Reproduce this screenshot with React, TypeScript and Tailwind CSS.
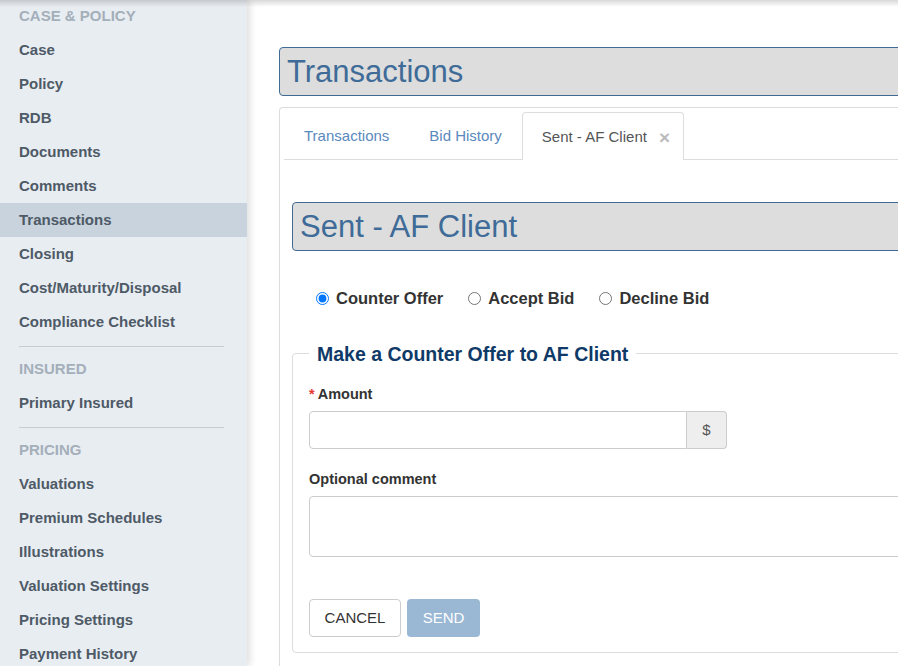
import React from 'react';

type NavItem = { label: string; active?: boolean };
type NavGroup = { title: string; items: NavItem[] };

const groups: NavGroup[] = [
  {
    title: 'CASE & POLICY',
    items: [
      { label: 'Case' },
      { label: 'Policy' },
      { label: 'RDB' },
      { label: 'Documents' },
      { label: 'Comments' },
      { label: 'Transactions', active: true },
      { label: 'Closing' },
      { label: 'Cost/Maturity/Disposal' },
      { label: 'Compliance Checklist' },
    ],
  },
  { title: 'INSURED', items: [{ label: 'Primary Insured' }] },
  {
    title: 'PRICING',
    items: [
      { label: 'Valuations' },
      { label: 'Premium Schedules' },
      { label: 'Illustrations' },
      { label: 'Valuation Settings' },
      { label: 'Pricing Settings' },
      { label: 'Payment History' },
    ],
  },
];

function Sidebar() {
  return (
    <aside className="relative z-10 w-[247px] shrink-0 bg-[#e8edf2] shadow-[3px_0_7px_rgba(0,0,0,0.13)]">
      {groups.map((g, gi) => (
        <div key={g.title}>
          {gi > 0 && <div className="ml-[19px] mr-[23px] mt-[7px] mb-[5px] h-px bg-[#c5ccd3]" />}
          <div
            className={`flex items-center px-[19px] text-[15px] font-bold text-[#a4afba] ${
              gi === 0 ? 'h-[33px]' : 'h-[34px]'
            }`}
          >
            {g.title}
          </div>
          {g.items.map((it) => (
            <div
              key={it.label}
              className={`flex h-[34px] items-center px-[19px] text-[15px] font-bold text-[#4e5a66] ${
                it.active ? 'bg-[#c8d3de]' : ''
              }`}
            >
              {it.label}
            </div>
          ))}
        </div>
      ))}
    </aside>
  );
}

function TitleBox({ children }: { children: React.ReactNode }) {
  return (
    <div className="flex h-[49px] items-center rounded-[4px] border border-[#3f6a93] bg-[#dddddd] px-[7px] text-[31px] leading-none text-[#3e6b97]">
      {children}
    </div>
  );
}

function Radio({ label, checked }: { label: string; checked?: boolean }) {
  return (
    <label className="flex items-center gap-[7px] text-[16.5px] font-bold text-[#333333]">
      <input type="radio" name="action" defaultChecked={checked} className="m-0 h-[13px] w-[13px]" />
      {label}
    </label>
  );
}

export default function App() {
  return (
    <div
      className="relative flex h-screen overflow-hidden bg-white"
      style={{ fontFamily: '"Liberation Sans", Arial, sans-serif' }}
    >
      <div className="pointer-events-none absolute inset-x-0 top-0 z-20 h-[7px] bg-gradient-to-b from-black/15 to-transparent" />
      <Sidebar />
      <main className="min-w-0 flex-1 overflow-hidden pl-[32px] pt-[47px]">
        <div className="w-[calc(100%+40px)]">
          <TitleBox>Transactions</TitleBox>

          <div className="mt-[11px] rounded-t-[4px] border border-b-0 border-[#dddddd] pt-[4px] pl-[4px] pb-[40px]">
            <div className="flex h-[48px] border-b border-[#dddddd] pt-[1px] text-[15px]">
              <div className="flex items-center px-[20px] text-[#5a89bd]">Transactions</div>
              <div className="flex items-center px-[20px] text-[#5a89bd]">Bid History</div>
              <div className="-mb-px -mt-[1px] flex items-center rounded-t-[4px] border border-b-0 border-[#dddddd] bg-white pl-[19px] pr-[13px] pt-[1px] text-[#555555]">
                Sent - AF Client
                <span className="ml-[12px] text-[19px] font-bold leading-none text-[#bbbbbb]">×</span>
              </div>
            </div>

            <div className="pl-[8px]">
              <div className="mt-[42px]">
                <TitleBox>Sent - AF Client</TitleBox>
              </div>

              <div className="mt-[35px] flex items-center gap-[25px] pl-[24px]">
                <Radio label="Counter Offer" checked />
                <Radio label="Accept Bid" />
                <Radio label="Decline Bid" />
              </div>

              <fieldset className="mt-[32px] rounded-[4px] border border-[#dddddd] px-[16px] pb-[15px]">
                <legend className="px-[8px] text-[19.5px] font-bold leading-[22px] text-[#0f3a68]">
                  Make a Counter Offer to AF Client
                </legend>

                <div className="mt-[21px] text-[14.5px] font-bold leading-[17px] text-[#333333]">
                  <span className="mr-[3px] text-[#e53935]">*</span>Amount
                </div>
                <div className="mt-[8px] flex h-[38px] w-[418px]">
                  <input className="min-w-0 flex-1 rounded-l-[4px] border border-[#cccccc] px-3 outline-none" />
                  <div className="flex w-[40px] items-center justify-center rounded-r-[4px] border border-l-0 border-[#cccccc] bg-[#eeeeee] text-[15px] text-[#555555]">
                    $
                  </div>
                </div>

                <div className="mt-[22px] text-[14.5px] font-bold leading-[17px] text-[#333333]">
                  Optional comment
                </div>
                <textarea className="mt-[8px] block h-[61px] w-full resize-none rounded-[4px] border border-[#cccccc] px-3 py-2 outline-none" />

                <div className="mt-[42px] flex gap-[6px]">
                  <button className="h-[38px] w-[92px] rounded-[4px] border border-[#cccccc] bg-white text-[15px] text-[#333333]">
                    CANCEL
                  </button>
                  <button className="h-[38px] w-[73px] rounded-[4px] bg-[#9ab8d4] text-[15px] text-white">
                    SEND
                  </button>
                </div>
              </fieldset>
            </div>
          </div>
        </div>
      </main>
    </div>
  );
}
